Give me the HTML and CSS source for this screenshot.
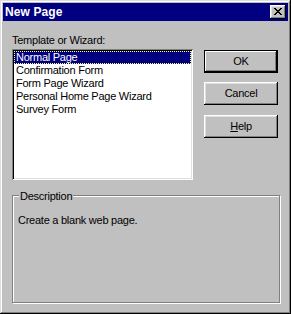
FILE: index.html
```html
<!DOCTYPE html>
<html>
<head>
<meta charset="utf-8">
<link rel="stylesheet" href="styles.css">
</head>
<body>
<div class="dialog">
  <div class="titlebar">
    <span class="title">New Page</span>
    <div class="close">
      <svg width="8" height="7" viewBox="0 0 8 7" shape-rendering="crispEdges">
        <path fill="#000" d="M0 0h2v1h-2zM6 0h2v1h-2zM1 1h2v1h-2zM5 1h2v1h-2zM2 2h4v1h-4zM3 3h2v1h-2zM2 4h4v1h-4zM1 5h2v1h-2zM5 5h2v1h-2zM0 6h2v1h-2zM6 6h2v1h-2z"/>
      </svg>
    </div>
  </div>
  <div class="content">
    <div class="main">
      <div class="left">
        <div class="label">Template or Wizard:</div>
        <div class="listbox">
          <div class="item selected">Normal Page</div>
          <div class="item">Confirmation Form</div>
          <div class="item">Form Page Wizard</div>
          <div class="item">Personal Home Page Wizard</div>
          <div class="item">Survey Form</div>
        </div>
      </div>
      <div class="buttons">
        <div class="btn default"><span>OK</span></div>
        <div class="btn"><span>Cancel</span></div>
        <div class="btn help"><span><u>H</u>elp</span></div>
      </div>
    </div>
    <div class="group">
      <span class="legend">Description</span>
      <div class="desc">Create a blank web page.</div>
    </div>
  </div>
</div>
</body>
</html>
```

FILE: styles.css
```css
* { box-sizing: border-box; }
html, body { margin: 0; padding: 0; background: #c0c0c0; }
body {
  font-family: "Liberation Sans", Arial, sans-serif;
  font-size: 11px;
  line-height: 13px;
  letter-spacing: -0.25px;
  color: #000;
}
.dialog {
  width: 291px;
  height: 314px;
  padding: 3px;
  background: #c0c0c0;
  box-shadow: inset -1px -1px #000, inset 1px 1px #dfdfdf, inset -2px -2px #808080, inset 2px 2px #fff;
  display: flex;
  flex-direction: column;
}
.titlebar {
  height: 18px;
  background: #000080;
  display: flex;
  align-items: center;
  justify-content: space-between;
  padding: 0 2px 0 2px;
}
.title {
  color: #fff;
  font-weight: bold;
  font-size: 12px;
  line-height: 18px;
  letter-spacing: 0.1px;
}
.close {
  width: 16px;
  height: 14px;
  background: #c0c0c0;
  box-shadow: inset -1px -1px #000, inset 1px 1px #fff, inset -2px -2px #808080, inset 2px 2px #dfdfdf;
  display: flex;
  padding: 3px 0 0 4px;
}
.close svg { display: block; }
.content {
  padding: 13px 9px 0 9px;
  display: flex;
  flex-direction: column;
}
.main {
  display: flex;
  justify-content: space-between;
}
.left {
  display: flex;
  flex-direction: column;
}
.label {
  margin-bottom: 2px;
}
.listbox {
  width: 181px;
  height: 131px;
  background: #fff;
  padding: 2px;
  box-shadow: inset 1px 1px #808080, inset -1px -1px #fff, inset 2px 2px #000, inset -2px -2px #dfdfdf;
}
.item {
  height: 13px;
  padding-left: 2px;
  white-space: nowrap;
  overflow: hidden;
}
.item.selected {
  background: #000080;
  color: #fff;
  outline: 1px dotted #ffff80;
  outline-offset: -1px;
}
.buttons {
  display: flex;
  flex-direction: column;
  gap: 9px;
  padding-top: 16px;
  margin-right: 1px;
}
.btn {
  width: 74px;
  height: 23px;
  background: #c0c0c0;
  box-shadow: inset -1px -1px #000, inset 1px 1px #fff, inset -2px -2px #808080, inset 2px 2px #dfdfdf;
  display: flex;
  align-items: center;
  justify-content: center;
}
.btn.default {
  box-shadow: inset 0 0 0 1px #000, inset -2px -2px #000, inset 2px 2px #fff, inset -3px -3px #808080;
}
.btn.help { margin-top: 1px; }
.group {
  margin-top: 15px;
  width: 268px;
  height: 108px;
  border: 1px solid #808080;
  box-shadow: inset 1px 1px #fff, 1px 1px #fff;
  display: flex;
  flex-direction: column;
  align-items: flex-start;
}
.legend {
  margin: -6px 0 0 6px;
  padding: 0 1px;
  background: #c0c0c0;
}
.desc {
  margin: 11px 0 0 5px;
}
```
